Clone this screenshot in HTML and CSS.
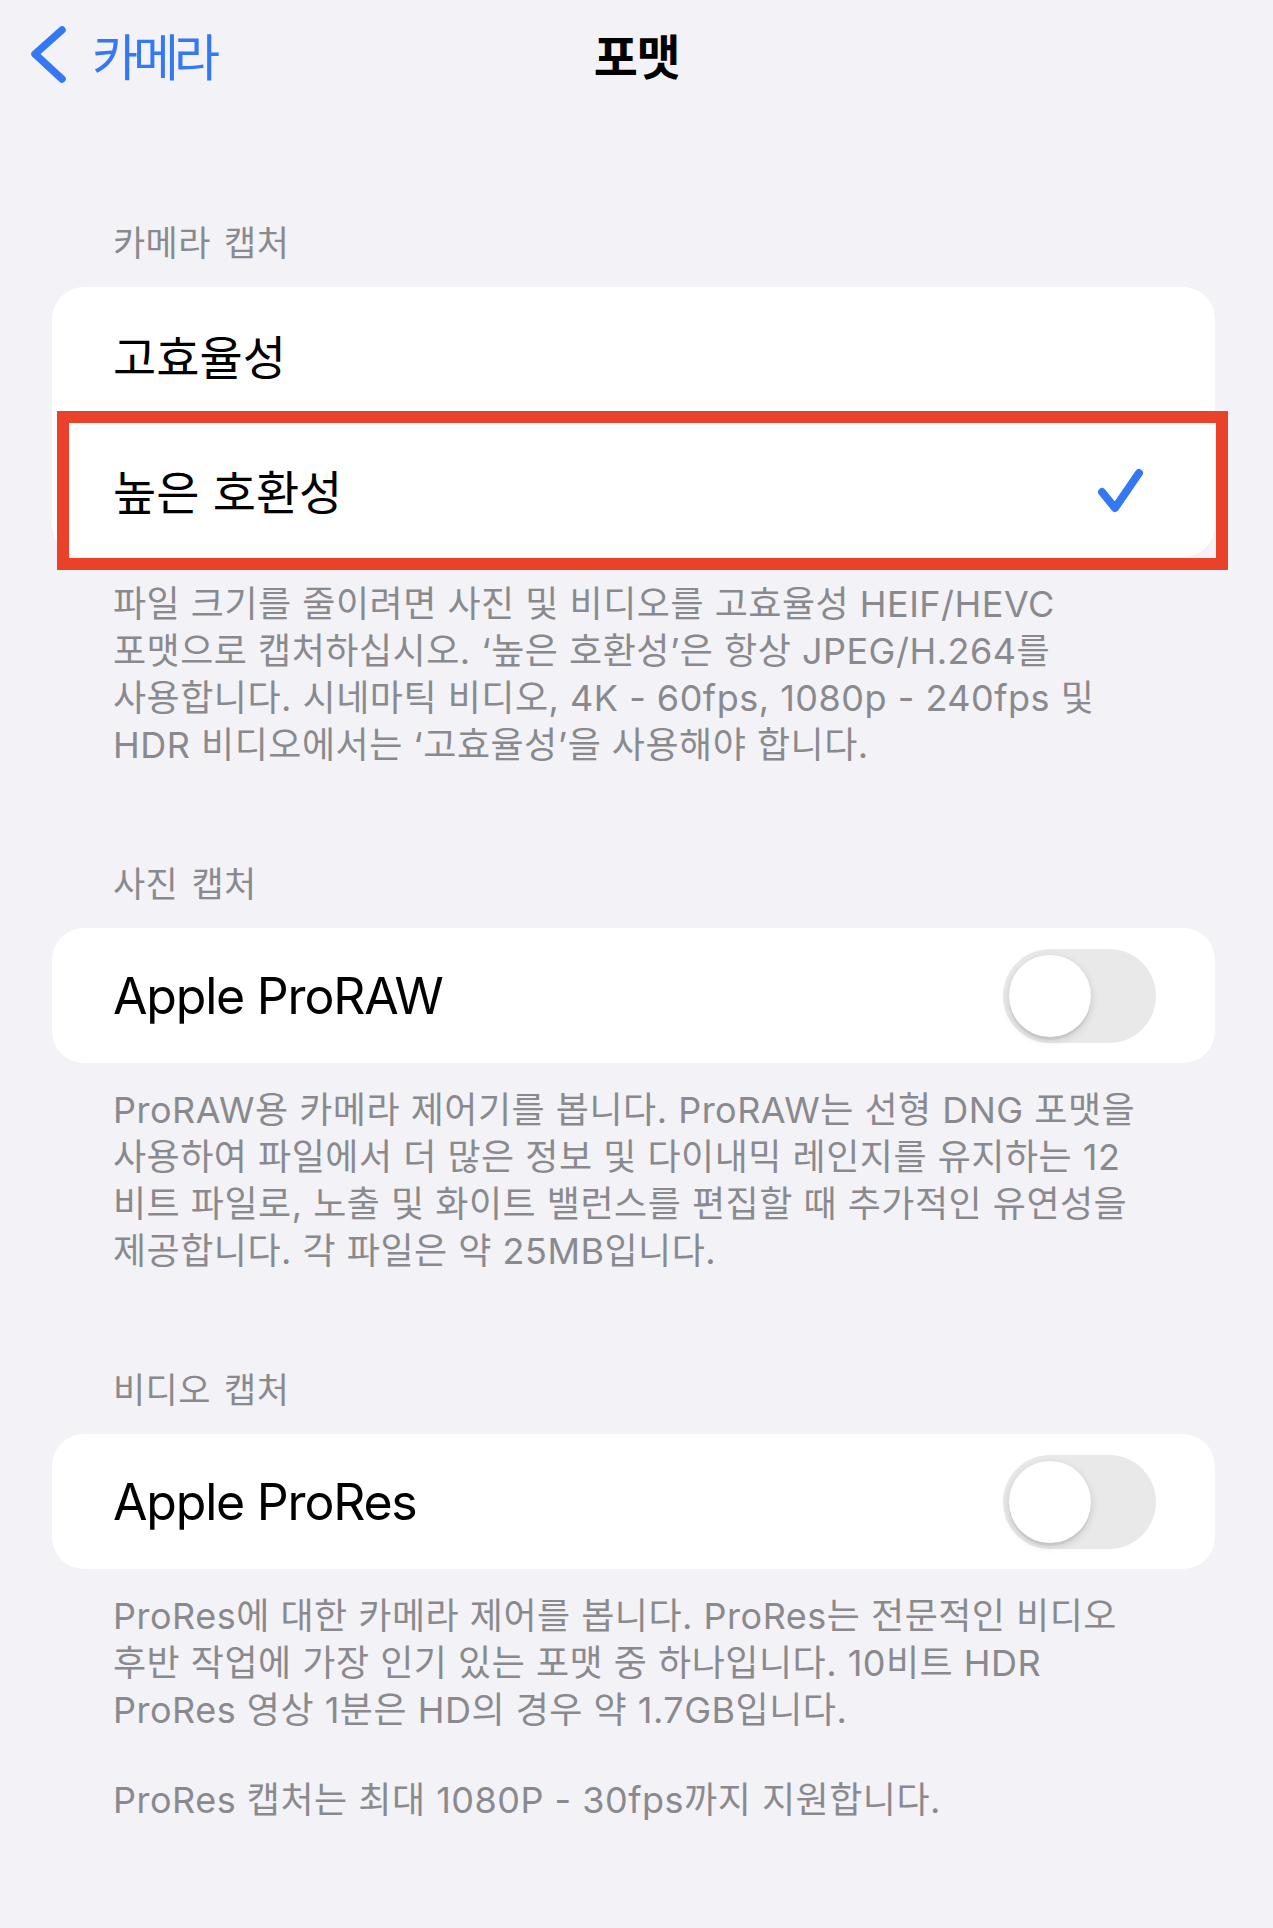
FILE: index.html
```html
<!DOCTYPE html>
<html lang="ko">
<head>
    <meta charset="UTF-8">
    <meta name="viewport" content="width=device-width, initial-scale=1.0">
    <title>포맷</title>
    <link rel="stylesheet" href="styles.css">
</head>
<body>
<div class="nav">
    <a class="back" href="#">
        <svg class="chevron" width="40" height="62" viewBox="0 0 40 62">
            <path d="M34 7 L7 31 L34 56" />
        </svg>
        <span>카메라</span>
    </a>
    <h1 class="title">포맷</h1>
    <div></div>
</div>

<div class="settings">
    <div class="group">
        <div class="group-header">카메라 캡처</div>
        <div class="card">
            <div class="row row-split">
                <span class="row-label ko">고효율성</span>
            </div>
            <div class="row">
                <span class="row-label ko">높은 호환성</span>
                <svg class="check" width="56" height="52" viewBox="0 0 56 52">
                    <path d="M10 28 L23 44 L47 9" />
                </svg>
            </div>
            <div class="highlight"></div>
        </div>
        <div class="group-footer">
            <p>파일 크기를 줄이려면 사진 및 비디오를 고효율성 HEIF/HEVC<br>
            포맷으로 캡처하십시오. ‘높은 호환성’은 항상 JPEG/H.264를<br>
            사용합니다. 시네마틱 비디오, 4K - 60fps, 1080p - 240fps 및<br>
            HDR 비디오에서는 ‘고효율성’을 사용해야 합니다.</p>
        </div>
    </div>

    <div class="group">
        <div class="group-header">사진 캡처</div>
        <div class="card">
            <div class="row">
                <span class="row-label">Apple ProRAW</span>
                <div class="toggle"><div class="knob"></div></div>
            </div>
        </div>
        <div class="group-footer">
            <p>ProRAW용 카메라 제어기를 봅니다. ProRAW는 선형 DNG 포맷을<br>
            사용하여 파일에서 더 많은 정보 및 다이내믹 레인지를 유지하는 12<br>
            비트 파일로, 노출 및 화이트 밸런스를 편집할 때 추가적인 유연성을<br>
            제공합니다. 각 파일은 약 25MB입니다.</p>
        </div>
    </div>

    <div class="group">
        <div class="group-header">비디오 캡처</div>
        <div class="card">
            <div class="row">
                <span class="row-label">Apple ProRes</span>
                <div class="toggle"><div class="knob"></div></div>
            </div>
        </div>
        <div class="group-footer">
            <p>ProRes에 대한 카메라 제어를 봅니다. ProRes는 전문적인 비디오<br>
            후반 작업에 가장 인기 있는 포맷 중 하나입니다. 10비트 HDR<br>
            ProRes 영상 1분은 HD의 경우 약 1.7GB입니다.</p>
            <p>ProRes 캡처는 최대 1080P - 30fps까지 지원합니다.</p>
        </div>
    </div>
</div>
</body>
</html>
```

FILE: styles.css
```css
body {
    margin: 0;
    background-color: #f2f2f7;
    font-family: Inter, "Noto Sans CJK KR", sans-serif;
    color: #000;
}

/* top bar */
.nav {
    height: 108px;
    display: grid;
    grid-template-columns: 1fr auto 1fr;
    align-items: center;
}
.back {
    display: flex;
    align-items: center;
    padding-left: 28px;
    color: #3478f6;
    text-decoration: none;
    font-family: "Noto Sans CJK KR", sans-serif;
    font-size: 50px;
    letter-spacing: -5px;
}
.back span {
    margin-left: 24px;
    line-height: 1;
}
.chevron path {
    fill: none;
    stroke: #3478f6;
    stroke-width: 7.5;
    stroke-linecap: round;
    stroke-linejoin: round;
}
.title {
    margin: 0;
    font-family: "Noto Sans CJK KR", sans-serif;
    font-size: 48px;
    font-weight: 700;
    letter-spacing: -1.5px;
    line-height: 1;
}

/* groups */
.settings {
    padding: 115px 58px 60px 52px;
}
.group + .group {
    margin-top: 95px;
}
.group-header {
    padding-left: 61px;
    font-size: 35px;
    letter-spacing: 0.4px;
    word-spacing: 3px;
    line-height: 40px;
    color: #8a8a8e;
    margin-bottom: 24px;
}
.card {
    position: relative;
    background-color: #fff;
    border-radius: 32px;
}
.row {
    height: 135px;
    display: flex;
    align-items: center;
    justify-content: space-between;
    padding: 0 59px 0 61px;
    position: relative;
}
.row-split::after {
    content: "";
    position: absolute;
    left: 61px;
    right: 0;
    bottom: 0;
    height: 1px;
    background-color: #d8d8dc;
}
.row-label {
    font-size: 50px;
    letter-spacing: -1.2px;
}
.row-label.ko {
    font-family: "Noto Sans CJK KR", sans-serif;
    font-size: 47px;
    letter-spacing: 0;
}
.check {
    margin-right: 8px;
}
.check path {
    fill: none;
    stroke: #3478f6;
    stroke-width: 8;
    stroke-linecap: round;
    stroke-linejoin: round;
}

/* red annotation frame */
.highlight {
    position: absolute;
    left: 5px;
    top: 124px;
    width: 1171px;
    height: 159px;
    box-sizing: border-box;
    border: 12px solid #e9412a;
}

/* switch */
.toggle {
    width: 153px;
    height: 94px;
    border-radius: 47px;
    background-color: #e9e9ea;
    padding: 6px;
    box-sizing: border-box;
}
.knob {
    width: 82px;
    height: 82px;
    border-radius: 50%;
    background-color: #fff;
    box-shadow: 0 3px 8px rgba(0, 0, 0, 0.15), 0 3px 1px rgba(0, 0, 0, 0.06);
}

.group-footer {
    padding: 24px 0 0 61px;
    font-size: 36px;
    letter-spacing: 0.5px;
    line-height: 47px;
    color: #8a8a8e;
    white-space: nowrap;
}
.group-footer p {
    margin: 0;
}
.group-footer p + p {
    margin-top: 43px;
}
```
